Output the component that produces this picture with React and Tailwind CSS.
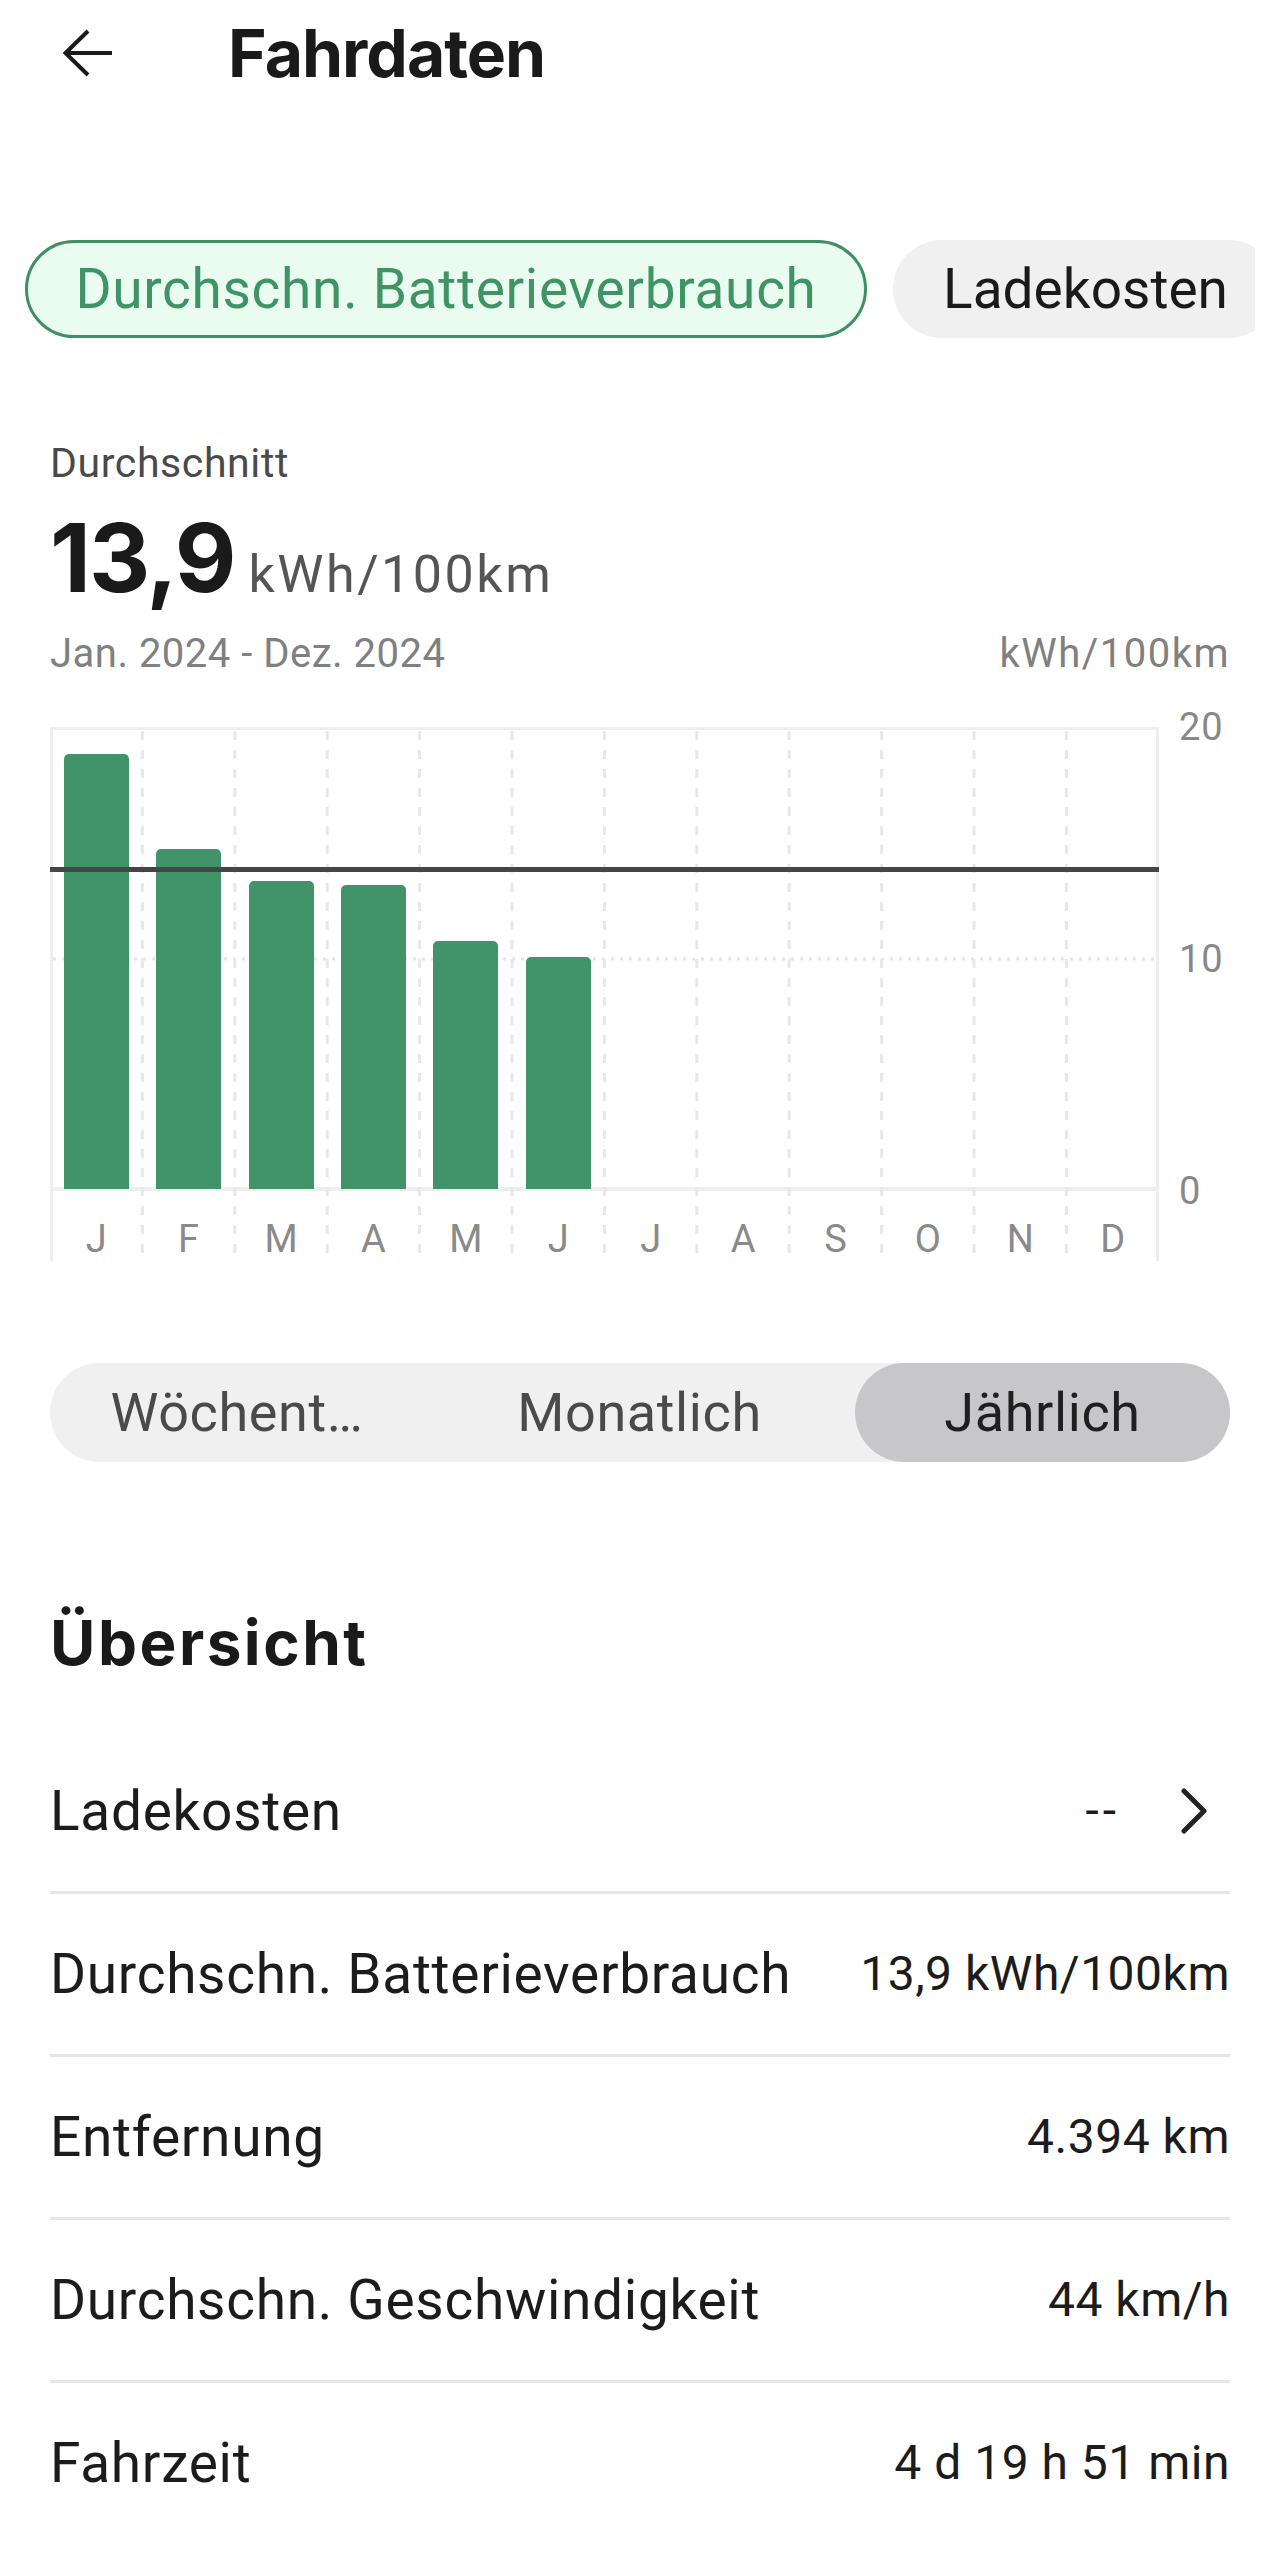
import React from "react";

const months = ["J", "F", "M", "A", "M", "J", "J", "A", "S", "O", "N", "D"];
const values = [18.93, 14.8, 13.4, 13.2, 10.8, 10.07, 0, 0, 0, 0, 0, 0];
const average = 13.9;
const PX_PER_UNIT = 23;

const rows = [
  { label: "Ladekosten", value: "--", link: true },
  { label: "Durchschn. Batterieverbrauch", value: "13,9 kWh/100km" },
  { label: "Entfernung", value: "4.394 km" },
  { label: "Durchschn. Geschwindigkeit", value: "44 km/h" },
  { label: "Fahrzeit", value: "4 d 19 h 51 min" },
];

function ChartGrid() {
  const cols = [1, 2, 3, 4, 5, 6, 7, 8, 9, 10, 11];
  return (
    <svg className="absolute inset-0" width="1109" height="534" viewBox="0 0 1109 534">
      <rect x="0" y="0" width="1109" height="3" fill="#eeeeee" />
      <rect x="0" y="0" width="3" height="534" fill="#eeeeee" />
      <rect x="1106" y="0" width="3" height="534" fill="#eeeeee" />
      <rect x="0" y="460" width="1109" height="4" fill="#eeeeee" />
      <line x1="3" x2="1106" y1="232" y2="232" stroke="#e4e4e4" strokeWidth="3" strokeDasharray="3 6" />
      {cols.map((k) => (
        <line
          key={k}
          x1={k * 92.4}
          x2={k * 92.4}
          y1="4"
          y2="534"
          stroke="#e8e8e8"
          strokeWidth="3"
          strokeDasharray="9 10"
        />
      ))}
    </svg>
  );
}

export default function App() {
  return (
    <div className="w-[1280px] min-h-[2549px] bg-white font-[Roboto,sans-serif] text-[#1c1c1c]">
      {/* Header */}
      <div className="flex items-center pt-[20px] h-[86px]">
        <svg className="ml-[62px]" width="52" height="48" viewBox="0 0 52 48" fill="none">
          <path d="M50 24H4M26 2L3.5 24L26 46" stroke="#1a1a1a" strokeWidth="4" strokeLinejoin="miter" />
        </svg>
        <h1 className="ml-[114px] font-[Inter,sans-serif] font-bold text-[66px] leading-none tracking-[-1px] text-[#1a1a1a]">
          Fahrdaten
        </h1>
      </div>

      {/* Metric chips */}
      <div className="mt-[154px] ml-[25px] w-[1230px] overflow-hidden flex gap-[26px] whitespace-nowrap">
        <div className="shrink-0 w-[842px] h-[98px] rounded-full border-[3px] border-[#3f8f62] bg-[#eafcf0] flex items-center justify-center">
          <span className="text-[55px] leading-none tracking-[0.7px] text-[#3f9466]">Durchschn. Batterieverbrauch</span>
        </div>
        <div className="shrink-0 w-[385px] h-[98px] rounded-full bg-[#f0f0f0] flex items-center justify-center">
          <span className="text-[55px] leading-none text-[#1a1a1a]">Ladekosten</span>
        </div>
      </div>

      <div className="px-[50px]">
        {/* Average */}
        <p className="mt-[105px] text-[41px] leading-none tracking-[0.6px] text-[#4a4a4a]">Durchschnitt</p>
        <div className="mt-[26px] flex items-baseline">
          <span className="font-[Inter,sans-serif] font-bold text-[95px] leading-none tracking-[-2px] text-[#1a1a1a]">
            13,9
          </span>
          <span className="ml-[14px] text-[52px] leading-none tracking-[2.5px] text-[#555555]">kWh/100km</span>
        </div>
        <div className="mt-[29px] flex justify-between text-[40px] leading-none tracking-[0.5px] text-[#808080]">
          <span>Jan. 2024 - Dez. 2024</span>
          <span className="tracking-[1.5px]">kWh/100km</span>
        </div>

        {/* Chart */}
        <div className="mt-[53px] flex items-start">
          <div className="relative w-[1109px] h-[534px] shrink-0">
            <ChartGrid />
            <div className="relative grid grid-cols-12 h-[462px] items-end">
              {values.map((v, i) => (
                <div key={i} className="flex justify-center">
                  {v > 0 && (
                    <div
                      className="w-[65px] rounded-t-[5px] bg-[#41936a]"
                      style={{ height: `${v * PX_PER_UNIT}px` }}
                    />
                  )}
                </div>
              ))}
            </div>
            <div className="relative grid grid-cols-12 pt-[31px] text-[38px] leading-none text-[#8a8a8a] text-center">
              {months.map((m, i) => (
                <span key={i}>{m}</span>
              ))}
            </div>
            <div
              className="absolute left-0 right-0 h-[5px] bg-[#454545]"
              style={{ top: `${462 - average * PX_PER_UNIT - 2.5}px` }}
            />
          </div>
          <div className="ml-[20px] -mt-[19px] h-[502px] flex flex-col justify-between text-[38px] leading-[38px] tracking-[1px] text-[#888888]">
            <span>20</span>
            <span>10</span>
            <span>0</span>
          </div>
        </div>

        {/* Period switch */}
        <div className="mt-[102px] h-[99px] rounded-full bg-[#f0f0f0] flex text-[54px] leading-none tracking-[0.6px]">
          <div className="w-[374px] flex items-center justify-center text-[#4a4a4a]">Wöchent…</div>
          <div className="flex-1 flex items-center justify-center text-[#4a4a4a]">Monatlich</div>
          <div className="w-[375px] rounded-full bg-[#c7c7c9] flex items-center justify-center text-[#1f1f1f]">
            Jährlich
          </div>
        </div>

        {/* Overview */}
        <h2 className="mt-[150px] font-[Inter,sans-serif] font-bold text-[62px] leading-none tracking-[2.5px] text-[#1a1a1a]">
          Übersicht
        </h2>
        <div className="mt-[57px]">
          {rows.map((row, i) => (
            <div key={row.label}>
              <div className="h-[160px] flex items-center justify-between">
                <span className="text-[55px] leading-none tracking-[0.7px]">{row.label}</span>
                {row.link ? (
                  <div className="flex items-center">
                    <span className="text-[48px] leading-none tracking-[4px]">{row.value}</span>
                    <svg className="ml-[60px] mr-[22px]" width="28" height="46" viewBox="0 0 28 46" fill="none">
                      <path d="M4 3L24 23L4 43" stroke="#222222" strokeWidth="5" strokeLinecap="round" strokeLinejoin="round" />
                    </svg>
                  </div>
                ) : (
                  <span className="text-[48px] leading-none tracking-[0.5px]">{row.value}</span>
                )}
              </div>
              {i < rows.length - 1 && <div className="h-[3px] bg-[#e6e6e6]" />}
            </div>
          ))}
        </div>
      </div>
    </div>
  );
}
